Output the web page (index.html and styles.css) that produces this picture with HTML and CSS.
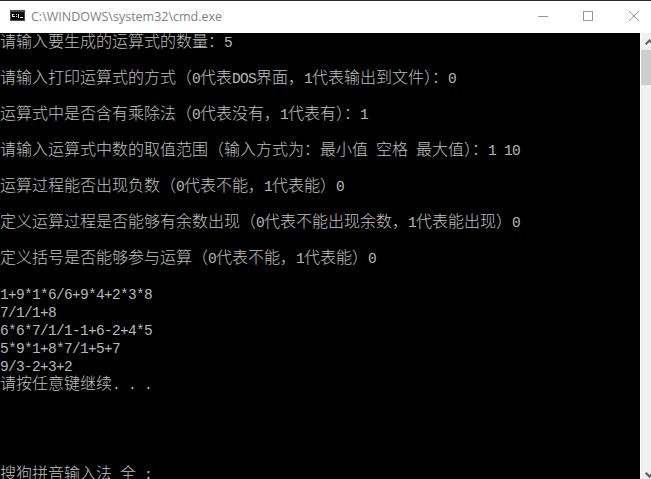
FILE: index.html
```html
<!DOCTYPE html>
<html lang="zh-CN">
<head>
<meta charset="utf-8">
<title>cmd.exe</title>
<link rel="stylesheet" href="styles.css">
</head>
<body>
<div class="window">
  <div class="titlebar">
    <svg class="app-icon" width="15" height="11" viewBox="0 0 15 11">
      <rect width="15" height="11" fill="#4a4a4a"/>
      <rect x="1" y="2" width="13" height="8" fill="#000"/>
      <path d="M2 4h2v1H2zM2 6h3v1H2zM2 5h1v1H2zM6 4h1v1H6zM6 6h1v1H6zM8 4h1v4H8zM10 7h3v1h-3z" fill="#e6e6e6"/>
    </svg>
    <span class="title">C:\WINDOWS\system32\cmd.exe</span>
    <div class="controls">
      <svg class="ctl" width="10" height="10" viewBox="0 0 10 10"><path d="M0 5.5H10" stroke="#999" fill="none"/></svg>
      <svg class="ctl" width="10" height="10" viewBox="0 0 10 10"><rect x=".5" y=".5" width="9" height="9" stroke="#999" fill="none"/></svg>
      <svg class="ctl ctl-close" width="10" height="10" viewBox="0 0 10 10"><path d="M0 0L10 10M10 0L0 10" stroke="#999" fill="none"/></svg>
    </div>
  </div>
  <div class="body">
    <pre class="console"><span class="row">请输入要生成的运算式的数量&#xFF1A;<i>5</i></span>
<span class="row"></span>
<span class="row">请输入打印运算式的方式&#xFF08;<i>0</i>代表<i>DOS</i>界面&#xFF0C;<i>1</i>代表输出到文件&#xFF09;&#xFF1A;<i>0</i></span>
<span class="row"></span>
<span class="row">运算式中是否含有乘除法&#xFF08;<i>0</i>代表没有&#xFF0C;<i>1</i>代表有&#xFF09;&#xFF1A;<i>1</i></span>
<span class="row"></span>
<span class="row">请输入运算式中数的取值范围&#xFF08;输入方式为&#xFF1A;最小值<i> </i>空格<i> </i>最大值&#xFF09;&#xFF1A;<i>1 10</i></span>
<span class="row"></span>
<span class="row">运算过程能否出现负数&#xFF08;<i>0</i>代表不能&#xFF0C;<i>1</i>代表能&#xFF09;<i>0</i></span>
<span class="row"></span>
<span class="row">定义运算过程是否能够有余数出现&#xFF08;<i>0</i>代表不能出现余数&#xFF0C;<i>1</i>代表能出现&#xFF09;<i>0</i></span>
<span class="row"></span>
<span class="row">定义括号是否能够参与运算&#xFF08;<i>0</i>代表不能&#xFF0C;<i>1</i>代表能&#xFF09;<i>0</i></span>
<span class="row"></span>
<span class="row"><i>1+9*1*6/6+9*4+2*3*8</i></span>
<span class="row"><i>7/1/1+8</i></span>
<span class="row"><i>6*6*7/1/1-1+6-2+4*5</i></span>
<span class="row"><i>5*9*1+8*7/1+5+7</i></span>
<span class="row"><i>9/3-2+3+2</i></span>
<span class="row">请按任意键继续<i>. . .</i></span>
<span class="row"></span>
<span class="row"></span>
<span class="row"></span>
<span class="row"></span>
<span class="row">搜狗拼音输入法<i> </i>全<i> :</i></span></pre>
    <div class="scrollbar">
      <svg class="arrow arrow-up" width="9" height="6" viewBox="0 0 9 6"><path d="M.7 5.3L4.5 1.5L8.3 5.3" stroke="#606060" stroke-width="2" fill="none"/></svg>
      <div class="thumb"></div>
      <div class="track"></div>
      <svg class="arrow arrow-down" width="9" height="6" viewBox="0 0 9 6"><path d="M.7 .7L4.5 4.5L8.3 .7" stroke="#606060" stroke-width="2" fill="none"/></svg>
    </div>
  </div>
</div>
</body>
</html>
```
FILE: styles.css
```css
html, body {
  margin: 0;
  padding: 0;
  width: 651px;
  height: 479px;
  overflow: hidden;
  background: #fff;
}
.window {
  display: flex;
  flex-direction: column;
  width: 651px;
  height: 479px;
  overflow: hidden;
}
.titlebar {
  flex: none;
  display: flex;
  align-items: center;
  height: 32px;
  border-top: 1px solid #2b2b2b;
  padding-left: 10px;
  background: #fff;
}
.app-icon { flex: none; margin-right: 6px; margin-bottom: 3px; }
.title {
  font: 12.5px "Open Sans", sans-serif;
  color: #7f7f7f;
  white-space: nowrap;
  margin-bottom: 1px;
}
.controls {
  display: flex;
  gap: 35px;
  margin-left: auto;
  margin-bottom: 2px;
  padding-right: 12px;
  align-items: center;
}
.ctl { display: block; }
.ctl-close { margin-left: 1px; }
.body {
  flex: 1;
  display: flex;
  min-height: 0;
}
.console {
  flex: none;
  width: 640px;
  margin: 0;
  height: 446px;
  overflow: hidden;
  background: #000;
  color: #c0c0c0;
  font: 300 16px/15px "Noto Sans CJK SC", sans-serif;
  white-space: pre;
}
.row { display: inline-block; height: 18px; vertical-align: top; }
.console i {
  font: 400 14.5px/15px "Liberation Mono", monospace;
  letter-spacing: -0.7px;
  color: #b8b8b8;
}
.scrollbar {
  flex: none;
  width: 17px;
  margin-left: 1px;
  display: flex;
  flex-direction: column;
  background: #f0f0f0;
}
.arrow { flex: none; display: block; margin-left: 4px; }
.arrow-up { margin-top: 6px; margin-bottom: 5px; }
.arrow-down { margin-bottom: 1px; }
.thumb { flex: none; height: 35px; background: #cdcdcd; }
.track { flex: 1; }
```
